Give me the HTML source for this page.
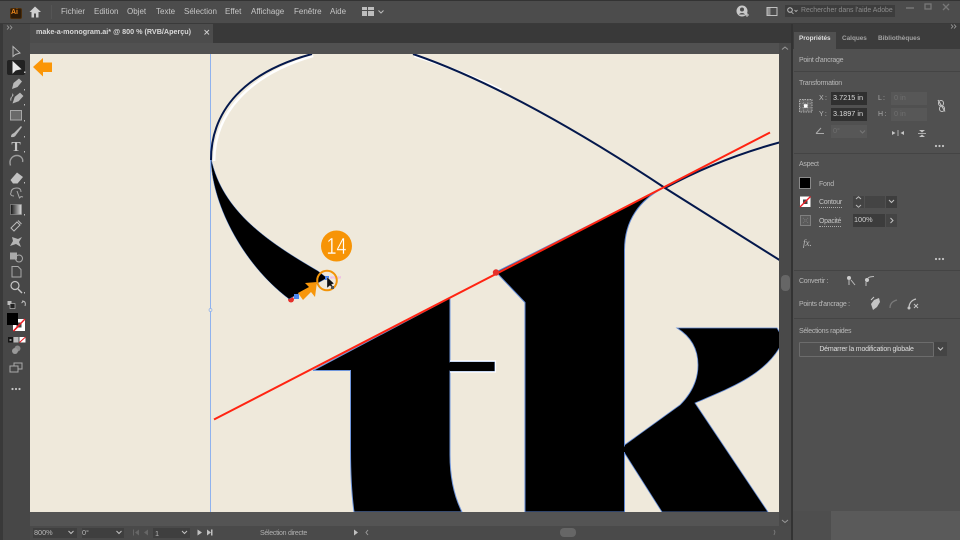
<!DOCTYPE html>
<html><head><meta charset="utf-8"><style>
html,body{margin:0;padding:0;width:960px;height:540px;overflow:hidden;background:#4e4e4e}
body{position:relative;font-family:"Liberation Sans",sans-serif}
.a,.t{position:absolute}
.t{white-space:nowrap;font-size:7px;letter-spacing:-.28px;line-height:10px;color:#b8b8b8}
.f{font-size:7.3px;letter-spacing:0}
.b{font-size:6.4px;font-weight:bold;letter-spacing:0}
.m{font-size:8px;letter-spacing:0;color:#c6c6c6;top:7px}
.u{border-bottom:1px dotted #aaa;line-height:8px;color:#c4c4c4}
svg{position:absolute;left:0;top:0;overflow:visible}
</style></head><body>

<!-- title bar -->
<div class="a" style="left:0;top:0;width:960px;height:1px;background:#333"></div>
<div class="a" style="left:0;top:1px;width:960px;height:22px;background:#4c4c4c"></div>
<div class="a" style="left:0;top:23px;width:960px;height:1px;background:#3a3a3a"></div>
<div class="a" style="left:10px;top:8px;width:10px;height:9px;background:#2b1a08;border-radius:2px;border:1px solid #4a2c0a"></div>
<div class="t" style="left:11px;top:8px;font-size:7px;letter-spacing:0;font-weight:bold;color:#f08a1c">Ai</div>
<div class="t m" style="left:61px">Fichier</div>
<div class="t m" style="left:94px">Edition</div>
<div class="t m" style="left:127px">Objet</div>
<div class="t m" style="left:156px">Texte</div>
<div class="t m" style="left:184px">Sélection</div>
<div class="t m" style="left:225px">Effet</div>
<div class="t m" style="left:251px">Affichage</div>
<div class="t m" style="left:294px">Fenêtre</div>
<div class="t m" style="left:330px">Aide</div>
<div class="a" style="left:785px;top:5px;width:110px;height:12px;background:#3d3d3d"></div>
<div class="t" style="left:801px;top:6px;font-size:6.9px;letter-spacing:0;color:#8b8b8b;width:93px;overflow:hidden">Rechercher dans l'aide Adobe</div>

<!-- tab strip -->
<div class="a" style="left:30px;top:24px;width:763px;height:19px;background:#393939"></div>
<div class="a" style="left:30px;top:24px;width:183px;height:19px;background:#4c4c4c"></div>
<div class="t" style="left:36px;top:27px;font-size:7.2px;letter-spacing:0;font-weight:bold;color:#d8d8d8">make-a-monogram.ai* @ 800 % (RVB/Aperçu)</div>
<div class="a" style="left:30px;top:43px;width:749px;height:11px;background:#515151"></div>

<!-- toolbar -->
<div class="a" style="left:0;top:24px;width:3px;height:516px;background:#393939"></div>
<div class="a" style="left:3px;top:24px;width:27px;height:516px;background:#474747"></div>
<div class="a" style="left:7px;top:60px;width:18px;height:15px;background:#222;border-radius:2px"></div>

<!-- canvas -->
<div class="a" style="left:30px;top:54px;width:749px;height:458px;background:#efe9db"></div>

<!-- bottom and right chrome -->
<div class="a" style="left:30px;top:512px;width:749px;height:14px;background:#545454"></div>
<div class="a" style="left:30px;top:526px;width:763px;height:14px;background:#4a4a4a"></div>
<div class="a" style="left:779px;top:43px;width:12px;height:483px;background:#494949"></div>
<div class="a" style="left:791px;top:24px;width:2px;height:516px;background:#333"></div>
<div class="a" style="left:781px;top:275px;width:9px;height:16px;background:#666;border-radius:4px"></div>
<div class="a" style="left:560px;top:528px;width:16px;height:9px;background:#666;border-radius:4px"></div>
<div class="a" style="left:33px;top:528px;width:44px;height:10px;background:#3f3f3f"></div>
<div class="a" style="left:82px;top:528px;width:42px;height:10px;background:#3f3f3f"></div>
<div class="a" style="left:153px;top:528px;width:37px;height:10px;background:#3f3f3f"></div>
<div class="t f" style="left:34px;top:528px">800%</div>
<div class="t f" style="left:82px;top:528px">0°</div>
<div class="t f" style="left:155px;top:529px">1</div>
<div class="t" style="left:260px;top:529px;color:#b0b0b0">Sélection directe</div>

<!-- right panel -->
<div class="a" style="left:793px;top:24px;width:167px;height:487px;background:#505050"></div>
<div class="a" style="left:793px;top:24px;width:167px;height:8px;background:#3c3c3c"></div>
<div class="a" style="left:793px;top:32px;width:167px;height:17px;background:#3c3c3c"></div>
<div class="a" style="left:794px;top:32px;width:42px;height:17px;background:#505050"></div>
<div class="a" style="left:831px;top:511px;width:129px;height:29px;background:#5a5a5a"></div>
<div class="t b" style="left:799px;top:34px;color:#dedede">Propriétés</div>
<div class="t b" style="left:842px;top:34px;color:#a2a2a2">Calques</div>
<div class="t b" style="left:878px;top:34px;color:#a2a2a2">Bibliothèques</div>
<div class="t" style="left:799px;top:56px">Point d'ancrage</div>
<div class="a" style="left:794px;top:71px;width:166px;height:1px;background:#444"></div>
<div class="t" style="left:799px;top:79px">Transformation</div>
<div class="t" style="left:819px;top:94px;color:#bbb">X :</div>
<div class="t" style="left:819px;top:110px;color:#bbb">Y :</div>
<div class="a" style="left:831px;top:92px;width:36px;height:13px;background:#303030"></div>
<div class="a" style="left:831px;top:108px;width:36px;height:13px;background:#303030"></div>
<div class="t f" style="left:833px;top:93px;color:#dcdcdc">3.7215 in</div>
<div class="t f" style="left:833px;top:109px;color:#dcdcdc">3.1897 in</div>
<div class="t" style="left:878px;top:94px;color:#aaa">L :</div>
<div class="t" style="left:878px;top:110px;color:#aaa">H :</div>
<div class="a" style="left:891px;top:92px;width:36px;height:13px;background:#575757"></div>
<div class="a" style="left:891px;top:108px;width:36px;height:13px;background:#575757"></div>
<div class="t f" style="left:894px;top:93px;color:#6f6f6f">0 in</div>
<div class="t f" style="left:894px;top:109px;color:#6f6f6f">0 in</div>
<div class="a" style="left:831px;top:125px;width:36px;height:13px;background:#575757"></div>
<div class="t f" style="left:833px;top:126px;color:#6f6f6f">0°</div>
<div class="a" style="left:794px;top:153px;width:166px;height:1px;background:#444"></div>
<div class="t" style="left:799px;top:160px">Aspect</div>
<div class="a" style="left:799px;top:177px;width:10px;height:10px;background:#000;border:1px solid #8a8a8a"></div>
<div class="t" style="left:819px;top:180px">Fond</div>
<div class="t u" style="left:819px;top:199px">Contour</div>
<div class="a" style="left:853px;top:196px;width:11px;height:12px;background:#444"></div>
<div class="a" style="left:865px;top:196px;width:20px;height:12px;background:#444"></div>
<div class="a" style="left:886px;top:196px;width:11px;height:12px;background:#3e3e3e"></div>
<div class="t u" style="left:819px;top:218px">Opacité</div>
<div class="a" style="left:853px;top:214px;width:32px;height:13px;background:#3c3c3c"></div>
<div class="a" style="left:886px;top:214px;width:11px;height:13px;background:#444"></div>
<div class="t f" style="left:854px;top:215px;color:#d0d0d0">100%</div>
<div class="t" style="left:803px;top:238px;font-family:'Liberation Serif',serif;font-style:italic;font-size:9px;letter-spacing:0;color:#bbb">fx.</div>
<div class="a" style="left:794px;top:270px;width:166px;height:1px;background:#444"></div>
<div class="t" style="left:799px;top:277px">Convertir :</div>
<div class="t" style="left:799px;top:300px">Points d'ancrage :</div>
<div class="a" style="left:794px;top:318px;width:166px;height:1px;background:#444"></div>
<div class="t" style="left:799px;top:327px">Sélections rapides</div>
<div class="a" style="left:799px;top:342px;width:133px;height:13px;border:1px solid #6c6c6c;border-radius:1px"></div>
<div class="t" style="left:799px;top:345px;width:135px;text-align:center;color:#dedede;letter-spacing:-.2px">Démarrer la modification globale</div>
<div class="a" style="left:934px;top:342px;width:13px;height:14px;background:#444;border:0"></div>

<!-- artwork -->
<svg width="960" height="540" viewBox="0 0 960 540">
<defs><clipPath id="c"><rect x="30" y="54" width="749" height="458"/></clipPath></defs>
<g clip-path="url(#c)">
<line x1="210.500" y1="54" x2="210.500" y2="512" stroke="#8fb2ee" stroke-width="1"/>
<circle cx="210.500" cy="310" r="1.500" fill="#efe9db" stroke="#8fb2ee" stroke-width=".7"/>
<!-- white offset -->
<path d="M213 160C213 113 247 74 312 55M413 55C445 65 472 75 500 89" fill="none" stroke="#fff" stroke-width="2.400" transform="translate(1.200,1)"/>
<circle cx="291" cy="299.500" r="3" fill="#e5302a"/>
<!-- swash -->
<path d="M211 158C211 200 240 262 289 299L327 278L318 271C270 243 222 212 211 158Z" fill="#000" stroke="#4a78c8" stroke-width=".5"/>
<!-- t -->
<path d="M313 370.500L450 298V362H494.500V371H450V455C450 480 455 498 462 512H354C351 490 350.500 470 350.500 450V370.500Z" fill="#000" stroke="#6f96dc" stroke-width="1"/>
<path d="M450 361L495.500 361V372L450 372" fill="none" stroke="#fff" stroke-width="1.200"/>
<path d="M450 362H494.500V371H450Z" fill="#000"/>
<!-- k stem -->
<path d="M496 272L663 188C640 200 624.500 220 624.500 250V512H525V302.500Z" fill="#000" stroke="#5f88d4" stroke-width="1"/>
<!-- k arm -->
<path d="M677 328H777L781 335V345C765 375 730 388 695 403L768 512H662L624.500 453V445L680 405C692 393 698 380 698 365C698 348 690 336 677 328Z" fill="#000" stroke="#5f88d4" stroke-width=".8"/>
<rect x="622" y="446.500" width="4" height="5.500" fill="#000"/>
<!-- navy paths -->
<path d="M211 160C211 110 245 72 312 54M413 54C495 82 585 135 665 188L781 261" fill="none" stroke="#04184c" stroke-width="2"/>
<path d="M665 188C700 169 740 153 781 142" fill="none" stroke="#04184c" stroke-width="2"/>
<!-- red handle -->
<line x1="214" y1="419.500" x2="770" y2="132.500" stroke="#ff2412" stroke-width="2"/>
<circle cx="496" cy="272.500" r="3.200" fill="#e5302a"/>
<rect x="294" y="294" width="5" height="5" fill="#4a86f0"/>
<rect x="325" y="276" width="4" height="4" fill="#4a86f0"/>
<text x="330" y="278.500" font-size="3.600" fill="#f07cf0" font-family="Liberation Sans">anchor</text>
<!-- orange annotations -->
<circle cx="336.500" cy="246" r="15.500" fill="#f79406"/>
<text x="326.500" y="254" font-size="23" fill="#fff" stroke="#f79406" stroke-width=".4" font-family="Liberation Sans" textLength="20" lengthAdjust="spacingAndGlyphs">14</text>
<circle cx="327" cy="280.500" r="9.800" fill="none" stroke="#f29408" stroke-width="2"/>
<path d="M298 293L309 287L305 283L317 282L315 297L311 292L303 300Z" fill="#f7960a"/>
<path d="M327 277L327 288L330 285.500L333 289L334 288L331.500 284.500L334 283.500Z" fill="#111" stroke="#eee" stroke-width=".3"/>
<rect x="331" y="286" width="3" height="3" fill="#555"/>
<path d="M33 67L43 58V62.500H52V72H43V76.500Z" fill="#fb9606"/>
</g>

<!-- top bar icons -->
<path d="M35 6.500L29.500 12H31.500V17.500H34V13.500H36V17.500H38.500V12H41Z" fill="#cfcfcf"/>
<rect x="51" y="5" width="1" height="14" fill="#555"/>
<g fill="#bdbdbd"><rect x="362" y="7" width="5" height="3"/><rect x="368" y="7" width="6" height="3"/><rect x="362" y="11" width="5" height="5"/><rect x="368" y="11" width="6" height="5"/></g>
<path d="M378.500 10.500L381 13L383.500 10.500" fill="none" stroke="#bbb"/>
<circle cx="742" cy="11" r="5.500" fill="#c8c8c8"/><circle cx="742" cy="9.500" r="2" fill="#4c4c4c"/><path d="M739 14.500C740 12.500 744 12.500 745 14.500" fill="#4c4c4c"/>
<path d="M745 15H749M747 13V17" stroke="#c8c8c8"/>
<rect x="767" y="7.500" width="10" height="8" fill="none" stroke="#c0c0c0"/><rect x="767" y="7.500" width="3.500" height="8" fill="#c0c0c0" opacity=".6"/>
<circle cx="790" cy="10" r="2.300" fill="none" stroke="#c0c0c0"/><path d="M791.500 12L793.500 14M794.500 10L796 11.500L797.500 10" fill="none" stroke="#c0c0c0" stroke-width=".8"/>
<path d="M906 8H914" stroke="#777" stroke-width="1.500"/><rect x="925" y="4" width="6" height="5" fill="none" stroke="#777" stroke-width="1.300"/><path d="M943 4L949 10M949 4L943 10" stroke="#777" stroke-width="1.300"/>
<path d="M204.500 30L209 34.500M209 30L204.500 34.500" stroke="#cfcfcf" stroke-width=".9"/>
<path d="M7 25.500L9 27.500L7 29.500M10 25.500L12 27.500L10 29.500" fill="none" stroke="#aaa" stroke-width=".7"/>
<path d="M951 24.500L953 26.500L951 28.500M954 24.500L956 26.500L954 28.500" fill="none" stroke="#aaa" stroke-width=".7"/>

<!-- toolbar icons -->
<g fill="none" stroke="#c4c4c4" stroke-width="1">
<path d="M13 46.500V56.500L15.500 54.500L20 53Z" stroke="#b8b8b8"/>
<path d="M13 62V72.500L15.500 70L20.500 69Z" fill="#e8e8e8" stroke="#e8e8e8"/>
<path d="M12 89L13.500 83L19 78.500L22 81.500L17.500 87Z" fill="#b8b8b8" stroke="none"/>
<path d="M11 101C9 96 15 97 12.500 93.500M13 103L15 97L20 93L23 96L18.500 101Z" fill="#b8b8b8" stroke="#b8b8b8" stroke-width=".6"/>
<rect x="10.500" y="110.500" width="11" height="9.500" fill="#6a6a6a" stroke="#a8a8a8"/>
<path d="M11 137C11 134 13 133.500 14 133L21 126L22 127L16 135C15 137 13 137.500 11 137Z" fill="#b8b8b8" stroke="none"/>
<path d="M10.500 165.500C8.500 159 13 155.500 17 155.500C21 155.500 23.500 159 22.500 162" stroke="#9c9c9c" stroke-width="1.400"/>
<path d="M10.500 180L17 172.500L23 177L17.500 183.500H13Z" fill="#c2c2c2" stroke="none"/>
<path d="M11 193C11 189 14 188 17 188C20 188 21 190 21 192M14 196C11 196 10 194 11 193M17 191L19.500 198L21 196.500L23 197" stroke="#a8a8a8"/>
<path d="M14 231L11 228L17 222L20 225ZM18 220.500L21.500 224" stroke="#bbb"/>
<path d="M10 246L13 241L12 237L18 239L22 237L19 242L21 247L16 244Z" fill="#b5b5b5" stroke="none"/>
<rect x="10" y="252.500" width="7" height="7" fill="#aaa" stroke="none"/><circle cx="19" cy="258.500" r="3.500" stroke="#aaa"/>
<path d="M12 266.500H18L21 269.500V277H12Z" stroke="#a8a8a8"/>
<circle cx="15" cy="285.500" r="4" stroke-width="1.200"/><path d="M18 289L22 293" stroke-width="1.500"/>
<path d="M22 301C25 301 26 303 25 306M24 301L21.500 303" stroke="#bbb"/>
<rect x="15" y="346" width="5" height="5" rx="2.500" fill="#8a8a8a" stroke="#8a8a8a"/><circle cx="15" cy="351" r="3" fill="#9a9a9a" stroke="none"/>
<rect x="14" y="363" width="8" height="6" stroke="#aaa"/><rect x="10" y="366" width="8" height="6" fill="#474747" stroke="#aaa"/>
</g>
<text x="16" y="151" font-size="14" fill="#c6c6c6" text-anchor="middle" font-family="Liberation Serif" font-weight="bold">T</text>
<defs><linearGradient id="g"><stop offset="0" stop-color="#111"/><stop offset="1" stop-color="#ddd"/></linearGradient></defs>
<rect x="10.500" y="204.500" width="11" height="10" fill="url(#g)" stroke="#999" stroke-width=".6"/>
<g fill="#bbb"><rect x="7.500" y="301" width="4" height="4"/><rect x="10" y="303.500" width="5" height="5" fill="#222" stroke="#ccc" stroke-width=".6"/></g>
<rect x="13" y="319" width="12" height="12" fill="#fff"/><rect x="16.500" y="322.500" width="5" height="5" fill="#444"/>
<path d="M13.500 331L25 319" stroke="#ec1c24" stroke-width="1.500"/>
<rect x="7" y="313" width="11" height="12" fill="#000"/>
<path d="M13.500 331L18 326.500" stroke="#ec1c24" stroke-width="1.500"/>
<rect x="8" y="337" width="5" height="5.500" fill="#151515"/><rect x="9.500" y="339" width="2" height="2" fill="#888"/>
<rect x="13.500" y="337" width="5" height="5.500" fill="#bbb"/>
<rect x="19.500" y="337" width="6" height="5.500" fill="#fff"/><path d="M19.500 342.500L25.500 337" stroke="#ec1c24"/>
<g fill="#c4c4c4"><circle cx="12.500" cy="389" r="1.100"/><circle cx="16" cy="389" r="1.100"/><circle cx="19.500" cy="389" r="1.100"/>
<circle cx="936" cy="146" r="1.100"/><circle cx="939.500" cy="146" r="1.100"/><circle cx="943" cy="146" r="1.100"/>
<circle cx="936" cy="259" r="1.100"/><circle cx="939.500" cy="259" r="1.100"/><circle cx="943" cy="259" r="1.100"/></g>
<g fill="#bbb"><path d="M24 71.500H25.500V73H24ZM24 89H25V90.500H24ZM24 104H25V105.500H24ZM24 120H25V121.500H24ZM24 136H25V137.500H24ZM24 151H25V152.500H24ZM24 182H25V183.500H24ZM24 214H25V215.500H24ZM24 292H25V293.500H24Z"/></g>

<!-- panel icons -->
<rect x="799.500" y="99.500" width="12.500" height="12.500" fill="#666" stroke="#b0b0b0" stroke-dasharray="1.500 1"/><path d="M803.700 99.500V112M807.800 99.500V112M799.500 103.700H812M799.500 107.800H812" stroke="#999" stroke-width=".7" stroke-dasharray="1.500 1"/>
<rect x="804" y="104.200" width="3.500" height="3.500" fill="#fff"/>
<rect x="938.500" y="100.500" width="5" height="5.500" rx="2.500" fill="none" stroke="#c4c4c4"/><rect x="939.500" y="106" width="5" height="5.500" rx="2.500" fill="none" stroke="#c4c4c4"/><path d="M938 100L945 111.500" stroke="#c4c4c4" stroke-width="1.100"/>
<path d="M816 133.500H824M816 133.500L821 128" fill="none" stroke="#aaa"/>
<path d="M860 130.500L862.500 133L865 130.500" fill="none" stroke="#777"/>
<path d="M892 131V135L895.500 133ZM904 131V135L900.500 133Z" fill="#c4c4c4"/><path d="M898 130V136" stroke="#aaa"/>
<path d="M919 130H925L922 132.500ZM919 137H925L922 134.500Z" fill="#c4c4c4"/><path d="M918 133.500H926" stroke="#aaa"/>
<rect x="800" y="196.500" width="10.500" height="10.500" fill="#fff"/><rect x="803" y="199.500" width="4.500" height="4.500" fill="#444"/><path d="M800 207L810.500 196.500" stroke="#ec1c24" stroke-width="1.300"/>
<path d="M856 199L858.500 196.800L861 199M856 205L858.500 207.200L861 205" fill="none" stroke="#bbb"/>
<path d="M889 200L891.500 202.500L894 200" fill="none" stroke="#c4c4c4"/>
<rect x="800.500" y="215.500" width="10" height="10" fill="#5a5a5a" stroke="#808080"/><path d="M803 218L808 223M808 218L803 223" stroke="#777" stroke-dasharray="1 1"/>
<path d="M890.500 218L893 220.500L890.500 223" fill="none" stroke="#c4c4c4"/>
<circle cx="849" cy="278" r="2" fill="#ccc"/><path d="M849 279V285M851 280L855 285" stroke="#bbb"/>
<circle cx="867" cy="280" r="2" fill="#ccc"/><path d="M866 286V282M868 278C870 276.500 872 276.500 874 276.500" fill="none" stroke="#bbb"/>
<path d="M871 304L874 300L879 298L880 302L877 307L873 310Z" fill="#c4c4c4"/><path d="M871 300L874 297" stroke="#ccc"/>
<path d="M890 308C890 303 893 301 897 300" fill="none" stroke="#7a7a7a" stroke-width="1.300"/>
<path d="M909 308C909 303 912 300 916 299" fill="none" stroke="#c4c4c4" stroke-width="1.300"/><circle cx="909" cy="308" r="1.500" fill="#c4c4c4"/><path d="M914 304L918 308M918 304L914 308" stroke="#c4c4c4"/>
<path d="M938 347.500L940.500 350L943 347.500" fill="none" stroke="#c4c4c4"/>

<!-- bottom icons -->
<g fill="none" stroke="#c0c0c0"><path d="M68.500 531L71 533.500L73.500 531M116.500 531L119 533.500L121.500 531M182 531L184.500 533.500L187 531"/>
<path d="M782 49.500L785 47L788 49.500M782 520L785 522.500L788 520M368 530L366 532.500L368 535" stroke="#999"/></g>
<g fill="#c0c0c0"><path d="M197.500 529.500V535.500L202 532.500ZM207 529.500V535.500L211 532.500ZM211 529.500H212.500V535.500H211ZM354 529.500V535.500L358 532.500Z"/>
<path d="M134 529.500V535.500H133V529.500ZM139 529.500V535.500L135 532.500ZM148 529.500V535.500L144 532.500Z" fill="#666"/></g>
<path d="M775 532L774 530M775 532L774 535" stroke="#777"/>
</svg>
</body></html>
